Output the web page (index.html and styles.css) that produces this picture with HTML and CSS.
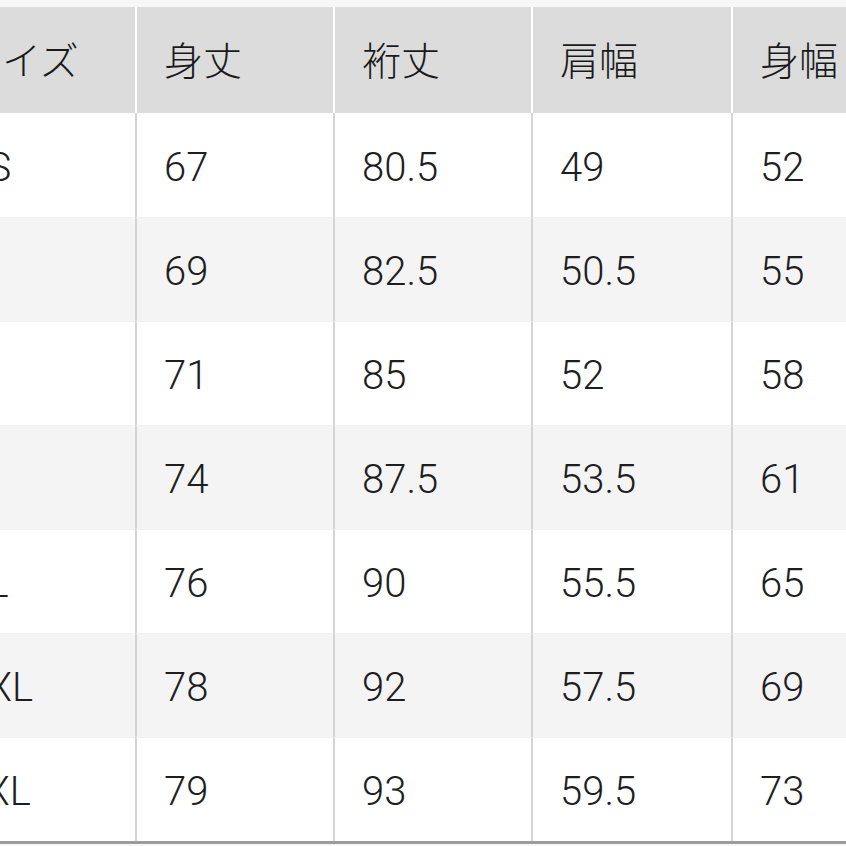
FILE: index.html
```html
<!DOCTYPE html>
<html lang="ja">
<head>
<meta charset="utf-8">
<title>サイズ表</title>
<link rel="stylesheet" href="styles.css">
</head>
<body>
<div class="sheet">
  <table class="size-table">
    <thead>
      <tr>
        <th>サイズ</th><th>身丈</th><th>裄丈</th><th>肩幅</th><th>身幅</th>
      </tr>
    </thead>
    <tbody>
      <tr><td>XS</td><td>67</td><td>80.5</td><td>49</td><td>52</td></tr>
      <tr><td>S</td><td>69</td><td>82.5</td><td>50.5</td><td>55</td></tr>
      <tr><td>M</td><td>71</td><td>85</td><td>52</td><td>58</td></tr>
      <tr><td>L</td><td>74</td><td>87.5</td><td>53.5</td><td>61</td></tr>
      <tr><td>XL</td><td>76</td><td>90</td><td>55.5</td><td>65</td></tr>
      <tr><td>XXL</td><td>78</td><td>92</td><td>57.5</td><td>69</td></tr>
      <tr><td>3XL</td><td>79</td><td>93</td><td>59.5</td><td>73</td></tr>
    </tbody>
  </table>
</div>
</body>
</html>
```

FILE: styles.css
```css
html, body {
  margin: 0;
  padding: 0;
  background: #f7f7f7;
  overflow: hidden;
}

.sheet {
  padding-top: 7px;
  width: 846px;
  height: 839px;
  overflow: hidden;
}

.size-table {
  margin-left: -64px;
  border-collapse: separate;
  border-spacing: 0;
  table-layout: fixed;
  width: 995px;
  font-family: Roboto, "Noto Sans CJK JP", sans-serif;
  font-weight: 300;
  font-size: 40px;
  color: #1e1e1e;
  border-bottom: 3px solid #9c9c9c;
}

.size-table th,
.size-table td {
  text-align: left;
  padding: 0 0 0 27px;
  white-space: nowrap;
  font-weight: 300;
  box-sizing: border-box;
}

.size-table th:nth-child(1), .size-table td:nth-child(1) { width: 199px; }
.size-table th:nth-child(2), .size-table td:nth-child(2) { width: 198px; }
.size-table th:nth-child(3), .size-table td:nth-child(3) { width: 198px; }
.size-table th:nth-child(4), .size-table td:nth-child(4) { width: 200px; }
.size-table th:nth-child(5), .size-table td:nth-child(5) { width: 200px; }

.size-table th {
  height: 106px;
  padding-bottom: 4px;
  background: #dcdcdc;
  font-family: "Noto Sans CJK JP", sans-serif;
  font-size: 39px;
  font-weight: 300;
  color: #1a1a1a;
}

.size-table th + th {
  border-left: 2px solid #ffffff;
}

.size-table td {
  height: 104px;
  padding-top: 4px;
  background: #ffffff;
  border-top: 1px solid #f0f0f0;
}

.size-table td + td {
  border-left: 2px solid #d4d4d4;
}

.size-table tbody tr:nth-child(even) td {
  background: #f4f4f4;
}

.size-table tbody tr:first-child td {
  border-top: 0;
}
```
